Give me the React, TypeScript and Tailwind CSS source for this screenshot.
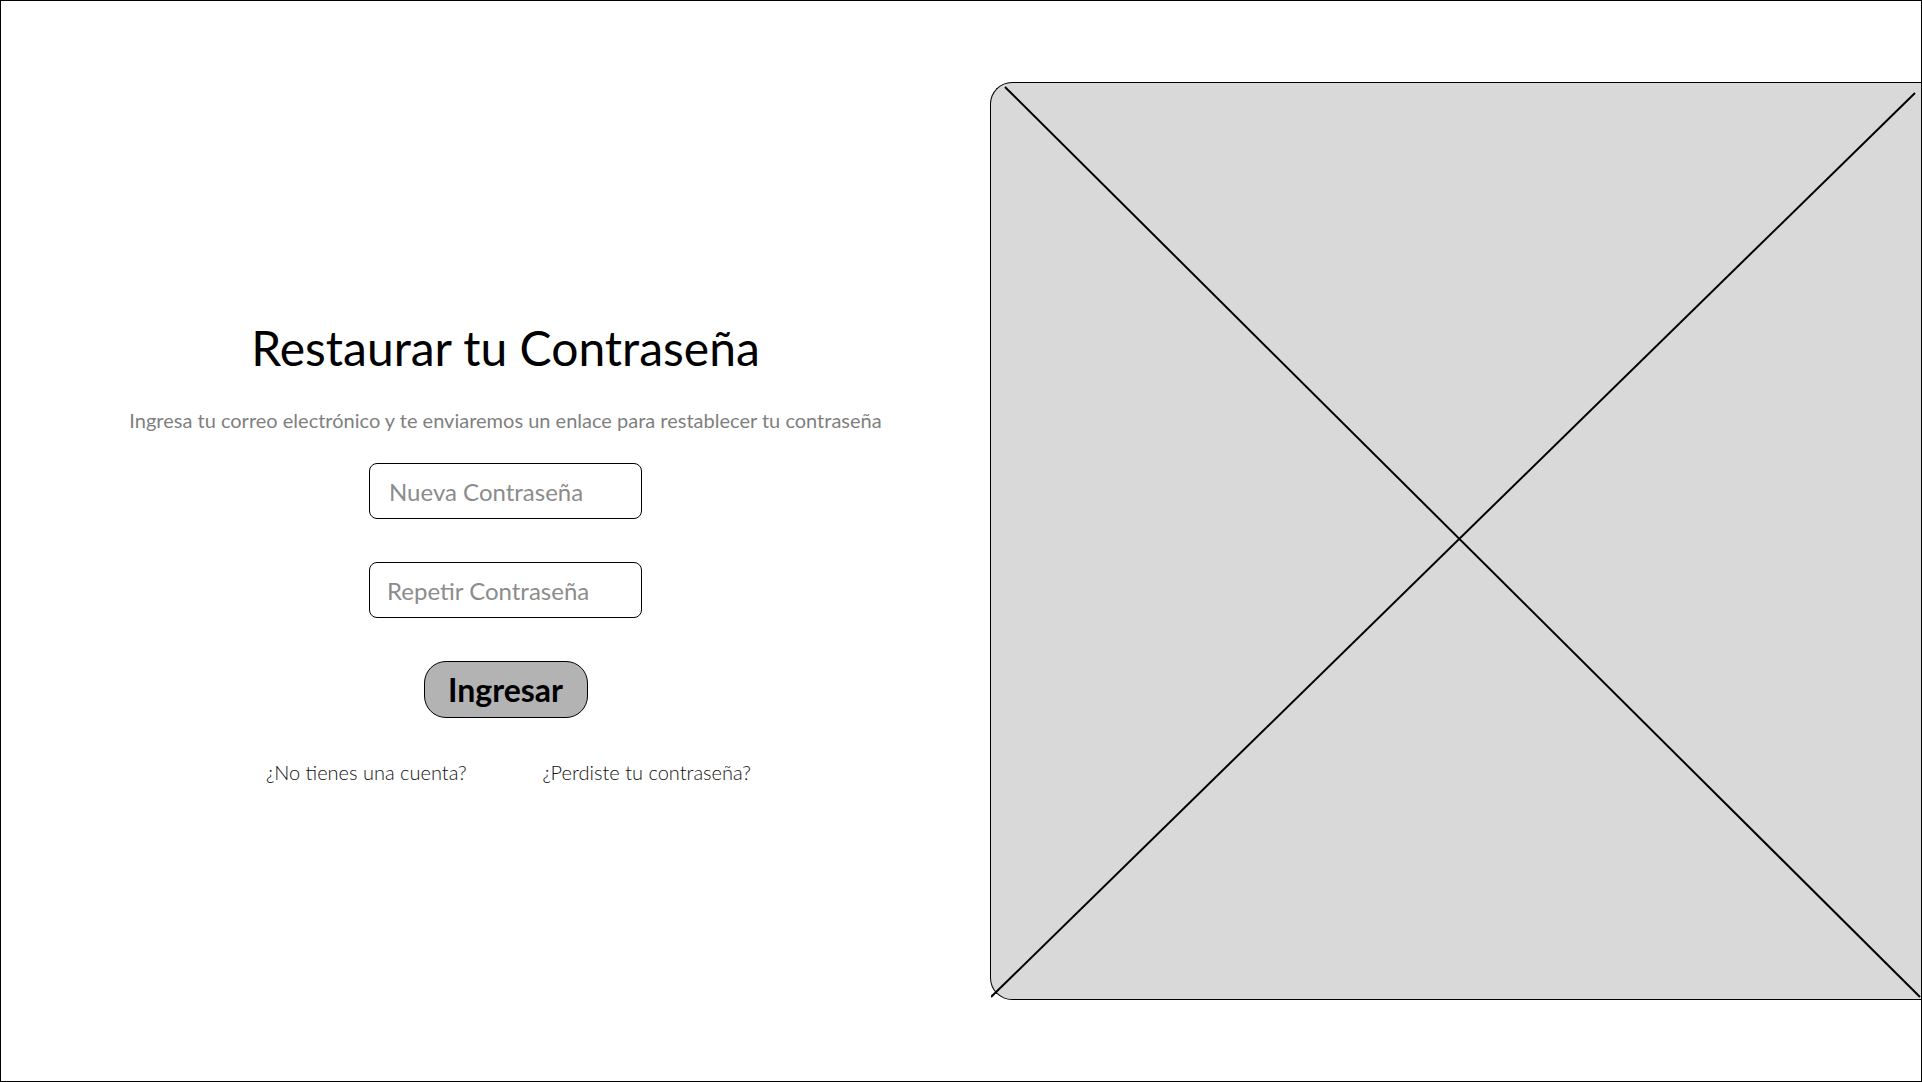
import React from "react";

export default function App() {
  return (
    <div
      className="w-[1922px] h-[1082px] border border-black bg-white flex overflow-hidden"
      style={{ fontFamily: "Lato, 'Open Sans', sans-serif" }}
    >
      <div className="w-[989px] shrink-0 pl-[20px] pt-[323px] flex flex-col items-center">
        <h1 className="text-[48px] leading-[48px] font-normal text-black">Restaurar tu Contraseña</h1>
        <p className="mt-[36px] text-[20px] leading-[24px] text-[#7f7f7f]">
          Ingresa tu correo electrónico y te enviaremos un enlace para restablecer tu contraseña
        </p>
        <input
          type="password"
          placeholder="Nueva Contraseña"
          className="mt-[31px] w-[273px] h-[56px] rounded-[8px] border border-black px-[19px] text-[24px] placeholder:text-[#8c8c8c] outline-none"
        />
        <input
          type="password"
          placeholder="Repetir Contraseña"
          className="mt-[43px] w-[273px] h-[56px] rounded-[8px] border border-black px-[17px] text-[24px] placeholder:text-[#8c8c8c] outline-none"
        />
        <button className="mt-[43px] w-[164px] h-[57px] rounded-[22px] border border-black bg-[#b3b3b3] text-[32px] font-bold text-black leading-none">
          Ingresar
        </button>
        <div className="mt-[42px] ml-[6px] flex gap-[76px] text-[20px] leading-[24px] font-light text-[#111111]">
          <span>¿No tienes una cuenta?</span>
          <span>¿Perdiste tu contraseña?</span>
        </div>
      </div>
      <div className="mt-[81px] h-[918px] flex-1 relative bg-[#d9d9d9] border-t border-b border-l border-black rounded-l-[22px]">
        <svg className="absolute left-0 top-0" width="931" height="917" viewBox="0 0 931 917">
          <line x1="14" y1="4" x2="929" y2="914" stroke="black" strokeWidth="2" />
          <line x1="0" y1="914" x2="924" y2="10" stroke="black" strokeWidth="2" />
        </svg>
      </div>
    </div>
  );
}
